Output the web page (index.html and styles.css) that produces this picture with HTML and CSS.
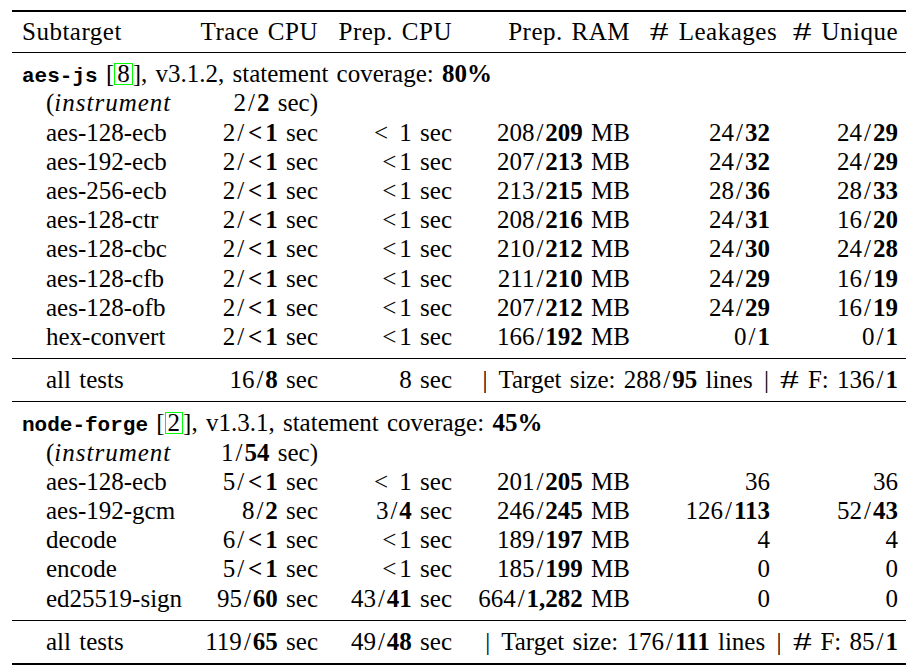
FILE: index.html
```html
<!DOCTYPE html>
<html>
<head>
<meta charset="utf-8">
<link rel="stylesheet" href="styles.css">
</head>
<body>
<table class="results">
  <colgroup>
    <col class="c-name"><col class="c-trace"><col class="c-pcpu"><col class="c-ram"><col class="c-leak"><col class="c-uniq">
  </colgroup>
  <thead>
    <tr>
      <th class="name">Subtarget</th>
      <th>Trace CPU</th>
      <th>Prep. CPU</th>
      <th>Prep. RAM</th>
      <th><span class="hash">#</span> Leakages</th>
      <th class="last"><span class="hash">#</span> Unique</th>
    </tr>
  </thead>
  <tbody>
    <tr class="section"><td colspan="6"><span class="tt">aes-js</span> [<span class="cite">8</span>], v3.1.2, statement coverage: <b>80%</b></td></tr>
    <tr><td class="sub">(<i class="mi">instrument</i></td><td class="num">2<span class="sl">/</span><b>2</b> sec)</td><td></td><td></td><td></td><td></td></tr>
    <tr><td class="sub">aes-128-ecb</td><td class="num">2<span class="sl">/</span><b><span class="lt">&lt;</span>1</b> sec</td><td class="num"><span class="lt">&lt;</span> 1 sec</td><td class="num">208<span class="sl">/</span><b>209</b> MB</td><td class="num">24<span class="sl">/</span><b>32</b></td><td class="num last">24<span class="sl">/</span><b>29</b></td></tr>
    <tr><td class="sub">aes-192-ecb</td><td class="num">2<span class="sl">/</span><b><span class="lt">&lt;</span>1</b> sec</td><td class="num"><span class="lt">&lt;</span>1 sec</td><td class="num">207<span class="sl">/</span><b>213</b> MB</td><td class="num">24<span class="sl">/</span><b>32</b></td><td class="num last">24<span class="sl">/</span><b>29</b></td></tr>
    <tr><td class="sub">aes-256-ecb</td><td class="num">2<span class="sl">/</span><b><span class="lt">&lt;</span>1</b> sec</td><td class="num"><span class="lt">&lt;</span>1 sec</td><td class="num">213<span class="sl">/</span><b>215</b> MB</td><td class="num">28<span class="sl">/</span><b>36</b></td><td class="num last">28<span class="sl">/</span><b>33</b></td></tr>
    <tr><td class="sub">aes-128-ctr</td><td class="num">2<span class="sl">/</span><b><span class="lt">&lt;</span>1</b> sec</td><td class="num"><span class="lt">&lt;</span>1 sec</td><td class="num">208<span class="sl">/</span><b>216</b> MB</td><td class="num">24<span class="sl">/</span><b>31</b></td><td class="num last">16<span class="sl">/</span><b>20</b></td></tr>
    <tr><td class="sub">aes-128-cbc</td><td class="num">2<span class="sl">/</span><b><span class="lt">&lt;</span>1</b> sec</td><td class="num"><span class="lt">&lt;</span>1 sec</td><td class="num">210<span class="sl">/</span><b>212</b> MB</td><td class="num">24<span class="sl">/</span><b>30</b></td><td class="num last">24<span class="sl">/</span><b>28</b></td></tr>
    <tr><td class="sub">aes-128-cfb</td><td class="num">2<span class="sl">/</span><b><span class="lt">&lt;</span>1</b> sec</td><td class="num"><span class="lt">&lt;</span>1 sec</td><td class="num">211<span class="sl">/</span><b>210</b> MB</td><td class="num">24<span class="sl">/</span><b>29</b></td><td class="num last">16<span class="sl">/</span><b>19</b></td></tr>
    <tr><td class="sub">aes-128-ofb</td><td class="num">2<span class="sl">/</span><b><span class="lt">&lt;</span>1</b> sec</td><td class="num"><span class="lt">&lt;</span>1 sec</td><td class="num">207<span class="sl">/</span><b>212</b> MB</td><td class="num">24<span class="sl">/</span><b>29</b></td><td class="num last">16<span class="sl">/</span><b>19</b></td></tr>
    <tr><td class="sub">hex-convert</td><td class="num">2<span class="sl">/</span><b><span class="lt">&lt;</span>1</b> sec</td><td class="num"><span class="lt">&lt;</span>1 sec</td><td class="num">166<span class="sl">/</span><b>192</b> MB</td><td class="num">0<span class="sl">/</span><b>1</b></td><td class="num last">0<span class="sl">/</span><b>1</b></td></tr>
  </tbody>
  <tbody>
    <tr><td class="sub">all tests</td><td class="num">16<span class="sl">/</span><b>8</b> sec</td><td class="num">8 sec</td><td class="num last" colspan="3"><span class="bar">|</span> Target size: 288<span class="sl">/</span><b>95</b> lines <span class="bar">|</span> <span class="hash">#</span> F: 136<span class="sl">/</span><b>1</b></td></tr>
  </tbody>
  <tbody>
    <tr class="section"><td colspan="6"><span class="tt">node-forge</span> [<span class="cite">2</span>], v1.3.1, statement coverage: <b>45%</b></td></tr>
    <tr><td class="sub">(<i class="mi">instrument</i></td><td class="num">1<span class="sl">/</span><b>54</b> sec)</td><td></td><td></td><td></td><td></td></tr>
    <tr><td class="sub">aes-128-ecb</td><td class="num">5<span class="sl">/</span><b><span class="lt">&lt;</span>1</b> sec</td><td class="num"><span class="lt">&lt;</span> 1 sec</td><td class="num">201<span class="sl">/</span><b>205</b> MB</td><td class="num">36</td><td class="num last">36</td></tr>
    <tr><td class="sub">aes-192-gcm</td><td class="num">8<span class="sl">/</span><b>2</b> sec</td><td class="num">3<span class="sl">/</span><b>4</b> sec</td><td class="num">246<span class="sl">/</span><b>245</b> MB</td><td class="num">126<span class="sl">/</span><b>113</b></td><td class="num last">52<span class="sl">/</span><b>43</b></td></tr>
    <tr><td class="sub">decode</td><td class="num">6<span class="sl">/</span><b><span class="lt">&lt;</span>1</b> sec</td><td class="num"><span class="lt">&lt;</span>1 sec</td><td class="num">189<span class="sl">/</span><b>197</b> MB</td><td class="num">4</td><td class="num last">4</td></tr>
    <tr><td class="sub">encode</td><td class="num">5<span class="sl">/</span><b><span class="lt">&lt;</span>1</b> sec</td><td class="num"><span class="lt">&lt;</span>1 sec</td><td class="num">185<span class="sl">/</span><b>199</b> MB</td><td class="num">0</td><td class="num last">0</td></tr>
    <tr><td class="sub">ed25519-sign</td><td class="num">95<span class="sl">/</span><b>60</b> sec</td><td class="num">43<span class="sl">/</span><b>41</b> sec</td><td class="num">664<span class="sl">/</span><b>1,282</b> MB</td><td class="num">0</td><td class="num last">0</td></tr>
  </tbody>
  <tbody class="final">
    <tr><td class="sub">all tests</td><td class="num">119<span class="sl">/</span><b>65</b> sec</td><td class="num">49<span class="sl">/</span><b>48</b> sec</td><td class="num last" colspan="3"><span class="bar">|</span> Target size: 176<span class="sl">/</span><b>111</b> lines <span class="bar">|</span> <span class="hash">#</span> F: 85<span class="sl">/</span><b>1</b></td></tr>
  </tbody>
</table>
</body>
</html>
```

FILE: styles.css
```css
html, body {
  margin: 0;
  padding: 0;
  background: #fff;
}

body {
  font-family: "Liberation Serif", "Times New Roman", serif;
  font-size: 25px;
  color: #000;
  word-spacing: 2px;
}

.results {
  margin: 10px 0 0 12px;
  width: 894px;
  table-layout: fixed;
  border-collapse: collapse;
  border-top: 2px solid #000;
  border-bottom: 2px solid #000;
}

.c-name { width: 176px; }
.c-trace { width: 140px; }
.c-pcpu { width: 134px; }
.c-ram { width: 178px; }
.c-leak { width: 140px; }
.c-uniq { width: 126px; }

.results th,
.results td {
  padding: 0 10px;
  line-height: 29.2px;
  white-space: nowrap;
  vertical-align: middle;
}

.results th {
  font-weight: normal;
  text-align: right;
  letter-spacing: 0.5px;
  padding-top: 5px;
  padding-bottom: 6px;
  border-bottom: 1px solid #000;
}

.results th.name {
  text-align: left;
}

.results tbody {
  border-top: 1px solid #000;
}

.results thead + tbody {
  border-top: none;
}

.results tbody tr:first-child td {
  padding-top: 6px;
}

.results tbody tr:last-child td {
  padding-bottom: 7px;
}

.results .last {
  padding-right: 8px;
}

.results .sub {
  padding-left: 34px;
  text-align: left;
}

.num {
  text-align: right;
}

.section td {
  text-align: left;
}

.tt {
  font-family: "Liberation Mono", "DejaVu Sans Mono", monospace;
  font-size: 21px;
  font-weight: bold;
  line-height: 1;
  word-spacing: 0;
}

.cite {
  display: inline-block;
  line-height: 20px;
  padding: 0 2px;
  border: 1px solid #00ff00;
  vertical-align: baseline;
}

.mi {
  letter-spacing: 1px;
}

.sl {
  padding: 0 2px;
}

.lt {
  padding: 0 3px 0 2px;
}

.hash {
  display: inline-block;
  transform: scaleX(1.5);
  margin: 0 4px 0 3px;
  line-height: 1;
}

.bar {
  padding: 0 3px;
}

b {
  font-weight: bold;
}
```
